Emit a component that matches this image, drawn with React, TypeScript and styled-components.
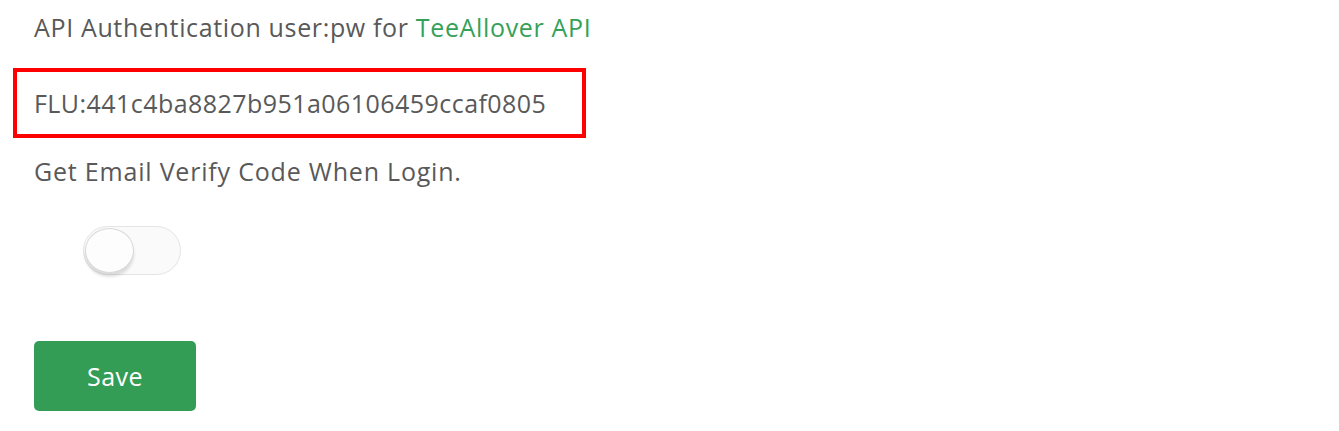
import React, { useState } from "react";
import styled, { createGlobalStyle } from "styled-components";

const Global = createGlobalStyle`
  html, body { margin: 0; padding: 0; background: #fff; }
  body { font-family: "Open Sans", "Liberation Sans", sans-serif; color: #555; }
`;

const Page = styled.div`
  display: flex;
  flex-direction: column;
  align-items: flex-start;
  padding: 0 0 0 34px;
`;

const Label = styled.p<{ $top: number; $spacing: number }>`
  margin: ${(p) => p.$top}px 0 0 0;
  font-size: 25px;
  line-height: 30px;
  letter-spacing: ${(p) => p.$spacing}px;
  color: #595959;
`;

const Link = styled.a`
  color: #35a158;
  text-decoration: none;
`;

const KeyBox = styled.div`
  margin: 26px 0 0 -21px;
  box-sizing: border-box;
  width: 573px;
  height: 70px;
  border: 4px solid #ff0000;
  padding-left: 17px;
  display: flex;
  align-items: center;
  font-size: 25px;
  letter-spacing: 0.45px;
  color: #595959;
`;

const Track = styled.button<{ $on: boolean }>`
  margin: 40px 0 0 49px;
  position: relative;
  width: 98px;
  height: 49px;
  box-sizing: border-box;
  border-radius: 25px;
  border: 1px solid #e4e4e4;
  background: ${(p) => (p.$on ? "#35a158" : "#fafafa")};
  padding: 0;
  cursor: pointer;
`;

const Knob = styled.span<{ $on: boolean }>`
  position: absolute;
  top: 1px;
  left: ${(p) => (p.$on ? "50px" : "1px")};
  width: 47px;
  height: 43px;
  border-radius: 50%;
  background: #fdfdfd;
  border: 1px solid #d9d9d9;
  box-shadow: 0 4px 3px rgba(0, 0, 0, 0.12);
`;

const SaveButton = styled.button`
  margin-top: 66px;
  width: 162px;
  height: 70px;
  border: none;
  border-radius: 5px;
  background: #339c55;
  color: #fff;
  font-family: "Open Sans", "Liberation Sans", sans-serif;
  font-size: 25px;
  letter-spacing: 0.5px;
  cursor: pointer;
`;

export default function App() {
  const [on, setOn] = useState(false);
  return (
    <Page>
      <Global />
      <Label $top={12} $spacing={0.65}>
        API Authentication user:pw for <Link href="#">TeeAllover API</Link>
      </Label>
      <KeyBox>FLU:441c4ba8827b951a06106459ccaf0805</KeyBox>
      <Label $top={18} $spacing={0.8}>Get Email Verify Code When Login.</Label>
      <Track $on={on} onClick={() => setOn(!on)} aria-label="toggle">
        <Knob $on={on} />
      </Track>
      <SaveButton>Save</SaveButton>
    </Page>
  );
}
